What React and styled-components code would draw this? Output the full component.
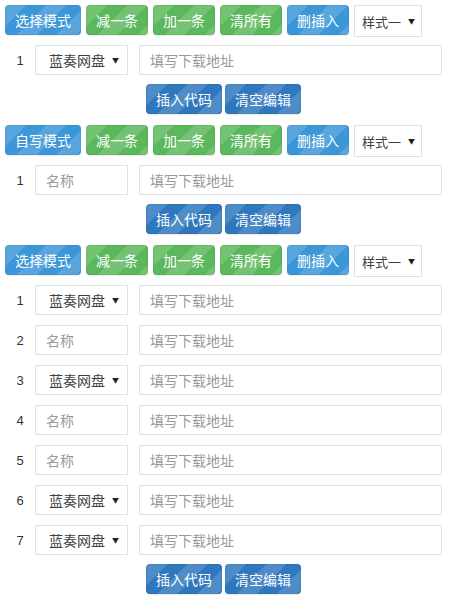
import React from "react";
import styled, { createGlobalStyle, css } from "styled-components";

const Global = createGlobalStyle`
  html, body { margin: 0; padding: 0; background: #fff; }
  body { font-family: "Noto Sans CJK SC", "Noto Sans", "Liberation Sans", sans-serif; }
  * { box-sizing: border-box; }
`;

const Page = styled.div`
  width: 450px;
  padding: 5px 8px 0 5px;
`;

const Section = styled.section`
  margin-bottom: 11px;
`;

const Toolbar = styled.div`
  display: flex;
  align-items: flex-start;
  gap: 5px;
`;

const stripes = css`
  background-image: linear-gradient(
    135deg,
    rgba(255, 255, 255, 0.15) 25%,
    transparent 25%,
    transparent 50%,
    rgba(255, 255, 255, 0.15) 50%,
    rgba(255, 255, 255, 0.15) 75%,
    transparent 75%,
    transparent
  );
  background-size: 40px 40px;
`;

const tones = {
  blue: "#3b97d7",
  green: "#5cb85c",
  navy: "#2f78bd",
};

const Btn = styled.button`
  height: 30px;
  padding: 0 9px;
  border: 1px solid rgba(0, 0, 0, 0.06);
  border-radius: 4px;
  background-color: ${(p) => tones[p.$tone]};
  ${stripes};
  color: #fff;
  font-family: inherit;
  font-size: 14px;
  line-height: 28px;
  white-space: nowrap;
  cursor: pointer;
  flex-shrink: 0;
  box-shadow: 0 1px 1px rgba(0, 0, 0, 0.08);
`;

const SelectBox = styled.div`
  display: flex;
  align-items: center;
  justify-content: ${(p) => (p.$small ? "space-between" : "flex-start")};
  height: ${(p) => (p.$small ? "32px" : "30px")};
  width: ${(p) => (p.$small ? "68px" : "93px")};
  padding: ${(p) => (p.$small ? "0 8px 0 7px" : "0 0 0 13px")};
  border: 1px solid #e0e0e0;
  background: #fff;
  color: #3a3f45;
  font-size: ${(p) => (p.$small ? "13px" : "14px")};
  white-space: nowrap;
  flex-shrink: 0;
`;

const Caret = styled.span`
  font-size: 7px;
  margin-left: 7px;
  color: #222;
`;

const Rows = styled.div`
  display: flex;
  flex-direction: column;
  gap: 10px;
  margin-top: 8px;
`;

const Row = styled.div`
  display: flex;
  align-items: center;
  height: 30px;
`;

const Num = styled.span`
  width: 30px;
  text-align: center;
  font-size: 13px;
  color: #333;
  font-family: "Liberation Sans", "Noto Sans", sans-serif;
`;

const Field = styled.input`
  height: 30px;
  border: 1px solid #e0e0e0;
  border-radius: 0;
  padding: 0 10px;
  font-family: inherit;
  font-size: 14px;
  color: #333;
  background: #fff;
  outline: none;
  width: ${(p) => (p.$grow ? "auto" : "93px")};
  flex: ${(p) => (p.$grow ? "1 1 auto" : "0 0 93px")};
  margin-left: ${(p) => (p.$grow ? "11px" : "0")};
  min-width: 0;
  &::placeholder { color: #999; }
`;

const Actions = styled.div`
  display: flex;
  justify-content: center;
  gap: 3px;
  margin-top: 9px;
`;

function Toolbar1({ mode }) {
  return (
    <Toolbar>
      <Btn $tone="blue">{mode}</Btn>
      <Btn $tone="green">减一条</Btn>
      <Btn $tone="green">加一条</Btn>
      <Btn $tone="green">清所有</Btn>
      <Btn $tone="blue">删插入</Btn>
      <SelectBox $small>
        样式一<Caret>▼</Caret>
      </SelectBox>
    </Toolbar>
  );
}

function LinkRow({ n, kind }) {
  return (
    <Row>
      <Num>{n}</Num>
      {kind === "select" ? (
        <SelectBox>
          蓝奏网盘<Caret>▼</Caret>
        </SelectBox>
      ) : (
        <Field placeholder="名称" />
      )}
      <Field $grow placeholder="填写下载地址" />
    </Row>
  );
}

const sections = [
  { mode: "选择模式", rows: ["select"] },
  { mode: "自写模式", rows: ["name"] },
  { mode: "选择模式", rows: ["select", "name", "select", "name", "name", "select", "select"] },
];

export default function App() {
  return (
    <>
      <Global />
      <Page>
        {sections.map((s, i) => (
          <Section key={i}>
            <Toolbar1 mode={s.mode} />
            <Rows>
              {s.rows.map((k, j) => (
                <LinkRow key={j} n={j + 1} kind={k} />
              ))}
            </Rows>
            <Actions>
              <Btn $tone="navy">插入代码</Btn>
              <Btn $tone="navy">清空编辑</Btn>
            </Actions>
          </Section>
        ))}
      </Page>
    </>
  );
}
